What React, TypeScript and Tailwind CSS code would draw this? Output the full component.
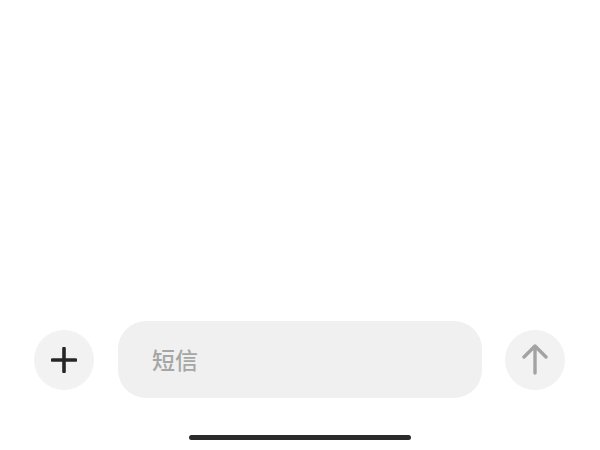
export default function App() {
  return (
    <div className="h-[450px] w-[600px] bg-white flex flex-col justify-end font-['Noto_Sans_CJK_SC',sans-serif]">
      <div className="flex items-center pl-[34px] pr-[35px] gap-[24px]">
        <button className="w-[60px] h-[60px] rounded-full bg-[#f2f2f2] flex items-center justify-center shrink-0">
          <svg width="26" height="26" viewBox="0 0 26 26" fill="none">
            <path d="M13 1.5v23M1.5 13h23" stroke="#262626" strokeWidth="3.6" strokeLinecap="round" />
          </svg>
        </button>
        <div className="w-[364px] h-[77px] rounded-[28px] bg-[#f0f0f0] flex items-center pl-[34px] shrink-0">
          <span className="text-[23px] font-medium text-[#a6a6a6] leading-none">短信</span>
        </div>
        <button className="w-[60px] h-[60px] rounded-full bg-[#f2f2f2] flex items-center justify-center shrink-0 ml-[-1px]">
          <svg width="28" height="32" viewBox="0 0 28 32" fill="none">
            <path d="M14 29V3M3 13L14 2l11 11" stroke="#a3a3a3" strokeWidth="3.4" strokeLinecap="round" strokeLinejoin="round" />
          </svg>
        </button>
      </div>
      <div className="flex justify-center mt-[37px] mb-[10px]">
        <div className="w-[222px] h-[5px] rounded-full bg-[#2b2b2b]" />
      </div>
    </div>
  );
}
